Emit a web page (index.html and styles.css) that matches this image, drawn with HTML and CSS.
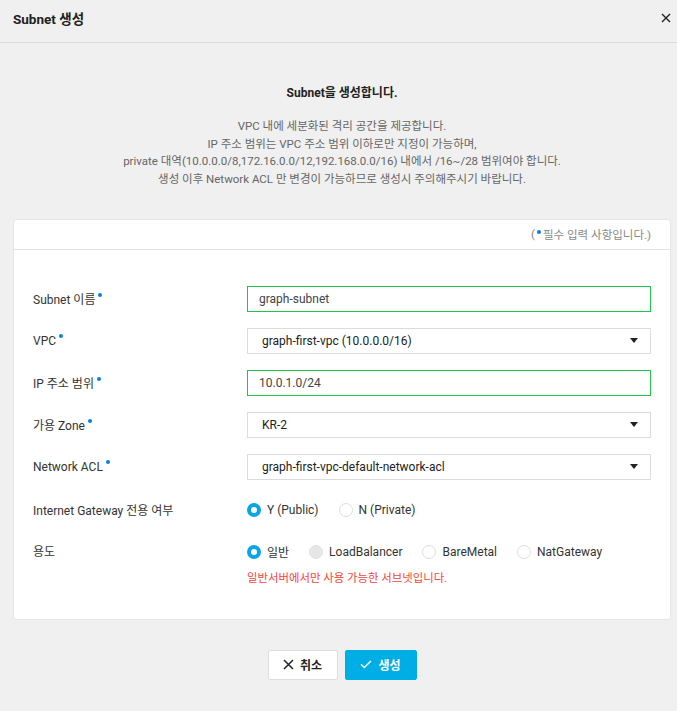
FILE: index.html
```html
<!DOCTYPE html>
<html lang="ko">
<head>
<meta charset="utf-8">
<link rel="stylesheet" href="styles.css">
</head>
<body>
<div class="modal">
  <header class="modal-header">
    <h1 class="modal-title">Subnet 생성</h1>
    <button class="close-btn" aria-label="닫기">
      <svg width="10" height="10" viewBox="0 0 10 10"><path d="M1 1L9 9M9 1L1 9" stroke="#222" stroke-width="1.4" fill="none"/></svg>
    </button>
  </header>
  <div class="modal-body">
    <p class="intro-title">Subnet을 생성합니다.</p>
    <p class="intro-desc">VPC 내에 세분화된 격리 공간을 제공합니다.<br>IP 주소 범위는 VPC 주소 범위 이하로만 지정이 가능하며,<br>private 대역(10.0.0.0/8,172.16.0.0/12,192.168.0.0/16) 내에서 /16~/28 범위여야 합니다.<br>생성 이후 Network ACL 만 변경이 가능하므로 생성시 주의해주시기 바랍니다.</p>
    <section class="card">
      <div class="card-head">(<span class="dot"></span>필수 입력 사항입니다.)</div>
      <div class="card-body">
        <div class="row">
          <label class="label">Subnet 이름<span class="req"></span></label>
          <div class="field"><div class="input valid">graph-subnet</div></div>
        </div>
        <div class="row">
          <label class="label">VPC<span class="req"></span></label>
          <div class="field"><div class="select">graph-first-vpc (10.0.0.0/16)<span class="caret"></span></div></div>
        </div>
        <div class="row">
          <label class="label">IP 주소 범위<span class="req"></span></label>
          <div class="field"><div class="input valid">10.0.1.0/24</div></div>
        </div>
        <div class="row">
          <label class="label">가용 Zone<span class="req"></span></label>
          <div class="field"><div class="select">KR-2<span class="caret"></span></div></div>
        </div>
        <div class="row">
          <label class="label">Network ACL<span class="req"></span></label>
          <div class="field"><div class="select">graph-first-vpc-default-network-acl<span class="caret"></span></div></div>
        </div>
        <div class="row radio-row">
          <label class="label">Internet Gateway 전용 여부</label>
          <div class="field radios">
            <span class="radio"><span class="circle checked"></span>Y (Public)</span>
            <span class="radio"><span class="circle"></span>N (Private)</span>
          </div>
        </div>
        <div class="row radio-row top">
          <label class="label">용도</label>
          <div class="field">
            <div class="radios">
              <span class="radio"><span class="circle checked"></span>일반</span>
              <span class="radio"><span class="circle disabled"></span>LoadBalancer</span>
              <span class="radio"><span class="circle"></span>BareMetal</span>
              <span class="radio"><span class="circle"></span>NatGateway</span>
            </div>
            <p class="warn">일반서버에서만 사용 가능한 서브넷입니다.</p>
          </div>
        </div>
      </div>
    </section>
    <div class="actions">
      <button class="btn btn-cancel">
        <svg width="11" height="11" viewBox="0 0 11 11"><path d="M1 1L10 10M10 1L1 10" stroke="#222" stroke-width="1.5" fill="none"/></svg>
        취소
      </button>
      <button class="btn btn-primary">
        <svg width="12" height="9" viewBox="0 0 12 9"><path d="M1 4.2L4.3 7.5L11 1" stroke="#fff" stroke-width="1.4" fill="none"/></svg>
        생성
      </button>
    </div>
  </div>
</div>
</body>
</html>
```

FILE: styles.css
```css
* { box-sizing: border-box; }
html, body {
  margin: 0;
  padding: 0;
  background: #f0f0f0;
  font-family: Roboto, "Noto Sans CJK KR", sans-serif;
  color: #333;
  font-size: 12px;
}
.modal { width: 677px; }
.modal-header {
  height: 43px;
  border-bottom: 1px solid #dcdcdc;
  display: flex;
  align-items: center;
  justify-content: space-between;
  padding: 0 6px 6px 13px;
}
.modal-title {
  margin: 0;
  font-size: 13.5px;
  font-weight: 700;
  color: #222;
}
.close-btn {
  border: 0;
  background: none;
  padding: 0;
  width: 10px;
  height: 10px;
  display: flex;
  cursor: pointer;
}
.modal-body { padding: 41px 6px 0 13px; }
.intro-title {
  margin: 0;
  text-align: center;
  font-weight: 700;
  font-size: 12px;
  color: #222;
  line-height: 18px;
}
.intro-desc {
  margin: 16px 0 0;
  text-align: center;
  font-size: 11.5px;
  line-height: 17.7px;
  color: #666;
}
.card {
  margin-top: 30px;
  background: #fff;
  border: 1px solid #e6e6e6;
  border-radius: 3px;
}
.card-head {
  height: 30px;
  border-bottom: 1px solid #e3e3e3;
  display: flex;
  align-items: center;
  justify-content: flex-end;
  padding: 0 19px 1px 0;
  color: #888;
  font-size: 11.5px;
}
.dot {
  display: inline-block;
  width: 4px;
  height: 4px;
  border-radius: 50%;
  background: #0a7fe0;
  margin: 0 2px 4px 2px;
}
.card-body { padding: 36px 19px 33px 19px; }
.row {
  display: flex;
  align-items: center;
  min-height: 26px;
  margin-bottom: 16px;
}
.row.radio-row { margin-bottom: 22px; min-height: 20px; margin-top: 20px; }
.row.top { align-items: flex-start; margin-bottom: 0; margin-top: 0; }
.label {
  width: 214px;
  flex: none;
  color: #333;
  font-size: 12px;
}
.req {
  display: inline-block;
  width: 4px;
  height: 4px;
  border-radius: 50%;
  background: #0a7fe0;
  margin-left: 3px;
  vertical-align: 7px;
}
.field { flex: 1; }
.input, .select {
  height: 26px;
  border: 1px solid #dcdcdc;
  display: flex;
  align-items: center;
  font-size: 12px;
  color: #444;
}
.input { padding-left: 11px; }
.input.valid { border-color: #1fc24a; }
.select {
  padding: 0 12px 0 14px;
  color: #222;
  justify-content: space-between;
}
.caret {
  width: 0;
  height: 0;
  border-left: 4px solid transparent;
  border-right: 4px solid transparent;
  border-top: 5px solid #222;
}
.radios { display: flex; align-items: center; height: 20px; }
.radio {
  display: inline-flex;
  align-items: center;
  margin-right: 20px;
  color: #333;
  font-size: 12px;
}
.circle {
  width: 14px;
  height: 14px;
  border-radius: 50%;
  border: 1px solid #ddd;
  background: #fff;
  margin-right: 6px;
  flex: none;
}
.circle.checked { border: 4px solid #0aa5e6; }
.circle.disabled { background: #e6e6e6; border-color: #e0e0e0; }
.warn {
  margin: 8px 0 0;
  color: #f5443b;
  font-size: 11.4px;
  line-height: 16px;
}
.actions {
  display: flex;
  justify-content: center;
  gap: 7px;
  margin-top: 30px;
}
.btn {
  height: 30px;
  border-radius: 2px;
  display: inline-flex;
  align-items: center;
  justify-content: center;
  gap: 6px;
  font-family: Roboto, "Noto Sans CJK KR", sans-serif;
  font-size: 12px;
  font-weight: 700;
  cursor: pointer;
}
.btn-cancel {
  width: 70px;
  background: #fff;
  border: 1px solid #ddd;
  color: #222;
}
.btn-primary {
  width: 72px;
  background: #00aee6;
  border: 1px solid #00aee6;
  color: #fff;
}
```
